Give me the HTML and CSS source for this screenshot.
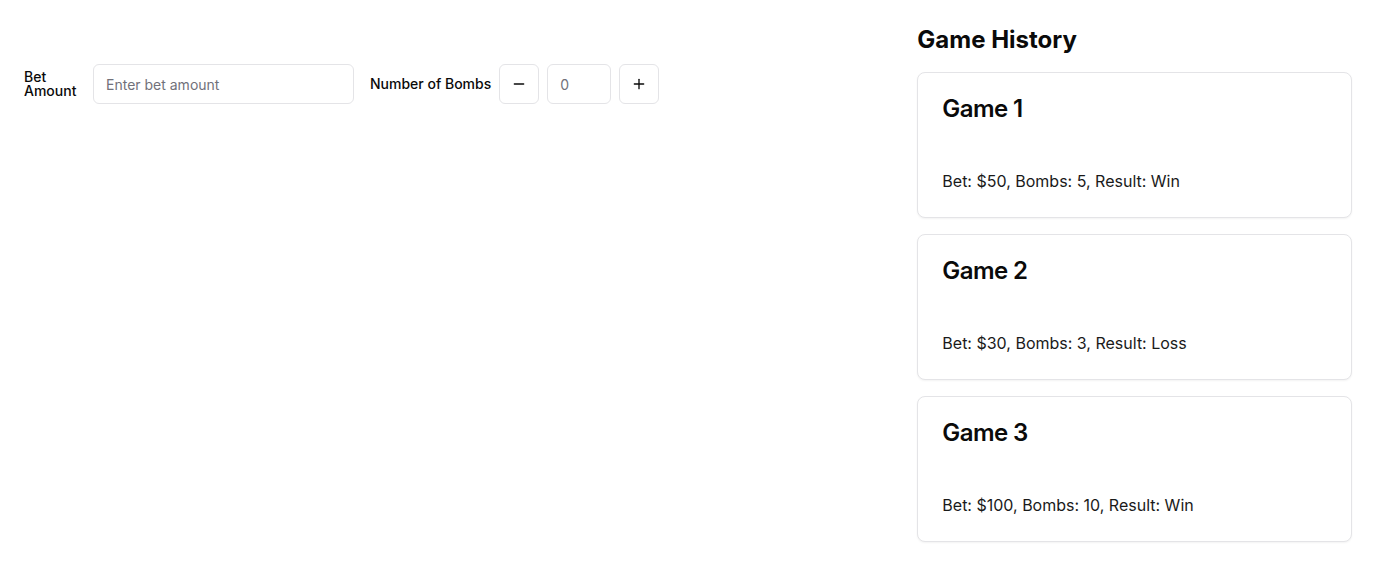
FILE: index.html
```html
<!DOCTYPE html>
<html lang="en">
<head>
<meta charset="utf-8">
<title>Mines</title>
<link rel="stylesheet" href="styles.css">
</head>
<body>
<div class="page">
  <section class="main">
    <div class="controls">
      <label class="label label-bet" for="bet">Bet Amount</label>
      <input id="bet" class="input input-bet" type="number" placeholder="Enter bet amount">
      <div class="bombs">
        <label class="label" for="bombs">Number of Bombs</label>
        <button class="btn-icon" type="button" aria-label="Decrease">
          <svg width="16" height="16" viewBox="0 0 24 24" fill="none" stroke="currentColor" stroke-width="2" stroke-linecap="round" stroke-linejoin="round"><path d="M5 12h14"/></svg>
        </button>
        <input id="bombs" class="input input-bombs" type="number" placeholder="0">
        <button class="btn-icon" type="button" aria-label="Increase">
          <svg width="16" height="16" viewBox="0 0 24 24" fill="none" stroke="currentColor" stroke-width="2" stroke-linecap="round" stroke-linejoin="round"><path d="M5 12h14"/><path d="M12 5v14"/></svg>
        </button>
      </div>
    </div>
  </section>
  <aside class="history">
    <h2 class="history-title">Game History</h2>
    <div class="cards">
      <div class="card">
        <div class="card-header"><h3 class="card-title">Game 1</h3></div>
        <div class="card-content"><p>Bet: $50, Bombs: 5, Result: Win</p></div>
      </div>
      <div class="card">
        <div class="card-header"><h3 class="card-title">Game 2</h3></div>
        <div class="card-content"><p>Bet: $30, Bombs: 3, Result: Loss</p></div>
      </div>
      <div class="card">
        <div class="card-header"><h3 class="card-title">Game 3</h3></div>
        <div class="card-content"><p>Bet: $100, Bombs: 10, Result: Win</p></div>
      </div>
    </div>
  </aside>
</div>
</body>
</html>
```

FILE: styles.css
```css
* { box-sizing: border-box; }
html, body { margin: 0; padding: 0; background: #ffffff; }
body {
  font-family: Inter, "Noto Sans", "Liberation Sans", sans-serif;
  color: #0a0a0a;
  font-size: 16px;
  line-height: 24px;
}
.page {
  display: grid;
  grid-template-columns: 2fr 1fr;
  gap: 24px;
  padding: 24px;
}
.main { padding-top: 40px; }
.controls {
  display: flex;
  align-items: center;
  gap: 16px;
}
.label {
  font-size: 14px;
  font-weight: 500;
  line-height: 14px;
}
.label-bet { width: 53px; }
.input {
  height: 40px;
  border: 1px solid #e4e4e7;
  border-radius: 6px;
  padding: 0 12px;
  font-family: inherit;
  font-size: 14px;
  color: #0a0a0a;
  background: #ffffff;
  outline: none;
  -moz-appearance: textfield;
}
.input::-webkit-outer-spin-button,
.input::-webkit-inner-spin-button { -webkit-appearance: none; margin: 0; }
.input::placeholder { color: #71717a; }
.input-bet { width: 261px; }
.input-bombs { width: 64px; }
.bombs {
  display: flex;
  align-items: center;
  gap: 8px;
}
.btn-icon {
  width: 40px;
  height: 40px;
  display: flex;
  align-items: center;
  justify-content: center;
  border: 1px solid #e4e4e7;
  border-radius: 6px;
  background: #ffffff;
  color: #0a0a0a;
  padding: 0;
  cursor: pointer;
}
.history-title {
  margin: 0 0 16px;
  font-size: 24px;
  line-height: 32px;
  font-weight: 700;
}
.cards {
  display: flex;
  flex-direction: column;
  gap: 16px;
}
.card {
  border: 1px solid #e4e4e7;
  border-radius: 8px;
  background: #ffffff;
  box-shadow: 0 1px 2px rgba(0, 0, 0, 0.05);
}
.card-header { padding: 24px; }
.card-title {
  margin: 0;
  font-size: 24px;
  line-height: 24px;
  font-weight: 600;
  letter-spacing: -0.6px;
}
.card-content { padding: 24px; }
.card-content p { margin: 0; color: #1a1a1a; }
```
